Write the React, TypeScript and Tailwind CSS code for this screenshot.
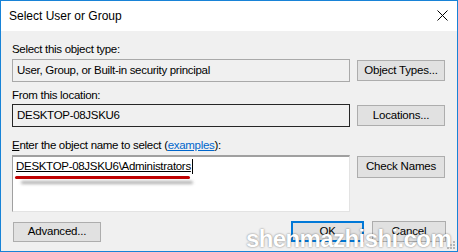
import React from 'react';

const font = { fontFamily: '"Liberation Sans", Arial, sans-serif' };

function WinButton({ label, className = '' }: { label: React.ReactNode; className?: string }) {
  return (
    <div
      className={`flex items-center justify-center bg-[#e1e1e1] border border-[#adadad] text-[11.5px] tracking-[-0.2px] text-black ${className}`}
    >
      {label}
    </div>
  );
}

export default function App() {
  return (
    <div
      className="relative w-[458px] h-[252px] border border-[#1883d7] bg-[#f0f0f0] flex flex-col overflow-hidden text-black"
      style={font}
    >
      {/* Title bar */}
      <div className="h-[30px] bg-white flex items-center justify-between pl-[8px] pr-[9px] shrink-0">
        <span className="text-[12px]">Select User or Group</span>
        <svg width="11" height="11" viewBox="0 0 11 11" className="mt-[-1px]">
          <path d="M0.5 0.5L10.5 10.5M10.5 0.5L0.5 10.5" stroke="#000" strokeWidth="1" />
        </svg>
      </div>

      <div className="flex flex-col pl-[11px] pr-[11px] text-[11.5px] tracking-[-0.3px]">
        <div className="mt-[11px] h-[15px] leading-[15px]">Select this object type:</div>
        <div className="mt-[2px] flex items-center gap-[7px]">
          <div className="w-[338px] h-[23px] border border-[#a9a9a9] bg-[#f0f0f0] flex items-center pl-[4px]">
            User, Group, or Built-in security principal
          </div>
          <WinButton label="Object Types..." className="w-[88px] h-[21px]" />
        </div>

        <div className="mt-[6px] h-[15px] leading-[15px]">From this location:</div>
        <div className="mt-[1px] flex items-center gap-[7px]">
          <div className="w-[338px] h-[23px] border border-[#262626] bg-[#f0f0f0] flex items-center pl-[4px]">
            DESKTOP-08JSKU6
          </div>
          <WinButton label="Locations..." className="w-[88px] h-[21px]" />
        </div>

        <div className="mt-[11px] h-[15px] leading-[15px]">
          <span className="underline">E</span>nter the object name to select (
          <span className="text-[#0066cc] underline">examples</span>):
        </div>
        <div className="mt-[2px] flex items-start gap-[7px]">
          <div className="relative w-[338px] h-[57px] bg-white border-t-2 border-l border-t-[#a0a0a0] border-l-[#a0a0a0] border-r border-b border-r-[#e3e3e3] border-b-[#e3e3e3] pl-[3px] pt-[2px]">
            <div className="flex items-start">
              <span className="leading-[15px] underline">DESKTOP-08JSKU6\Administrators</span>
              <span className="w-[1px] h-[15px] bg-black ml-[1px]" />
            </div>
            {/* red annotation stroke */}
            <div className="absolute left-[2px] top-[19px] w-[175px] h-[3px] bg-[#c00000] rounded-full" />
            <div className="absolute left-[8px] top-[24px] w-[172px] h-[3px] bg-[#9a9a9a] rounded-full blur-[1.5px] opacity-80" />
          </div>
          <WinButton label="Check Names" className="w-[88px] h-[22px] mt-[1px]" />
        </div>

        <div className="mt-[9px] flex items-center">
          <WinButton label="Advanced..." className="w-[88px] h-[20px] ml-[1px]" />
          <div className="ml-auto flex items-center gap-[8px]">
            <div className="w-[73px] h-[21px] bg-[#e1e1e1] border-2 border-[#0078d7] flex items-center justify-center">
              OK
            </div>
            <WinButton label="Cancel" className="w-[74px] h-[21px]" />
          </div>
        </div>
      </div>

      {/* watermark */}
      <div
        className="absolute left-[245px] top-[224px] text-[24px] font-bold text-white tracking-[-0.6px] [text-shadow:0_0_2px_rgba(0,0,0,0.55)] leading-[28px]"
      >
        shenmazhishi.com
      </div>

      {/* resize grip */}
      <svg width="8" height="8" viewBox="0 0 8 8" className="absolute right-[2px] bottom-[2px]">
        <rect x="6" y="0" width="2" height="2" fill="#b5b5b5" />
        <rect x="3" y="3" width="2" height="2" fill="#b5b5b5" />
        <rect x="6" y="3" width="2" height="2" fill="#b5b5b5" />
        <rect x="0" y="6" width="2" height="2" fill="#b5b5b5" />
        <rect x="3" y="6" width="2" height="2" fill="#b5b5b5" />
        <rect x="6" y="6" width="2" height="2" fill="#b5b5b5" />
      </svg>
    </div>
  );
}
